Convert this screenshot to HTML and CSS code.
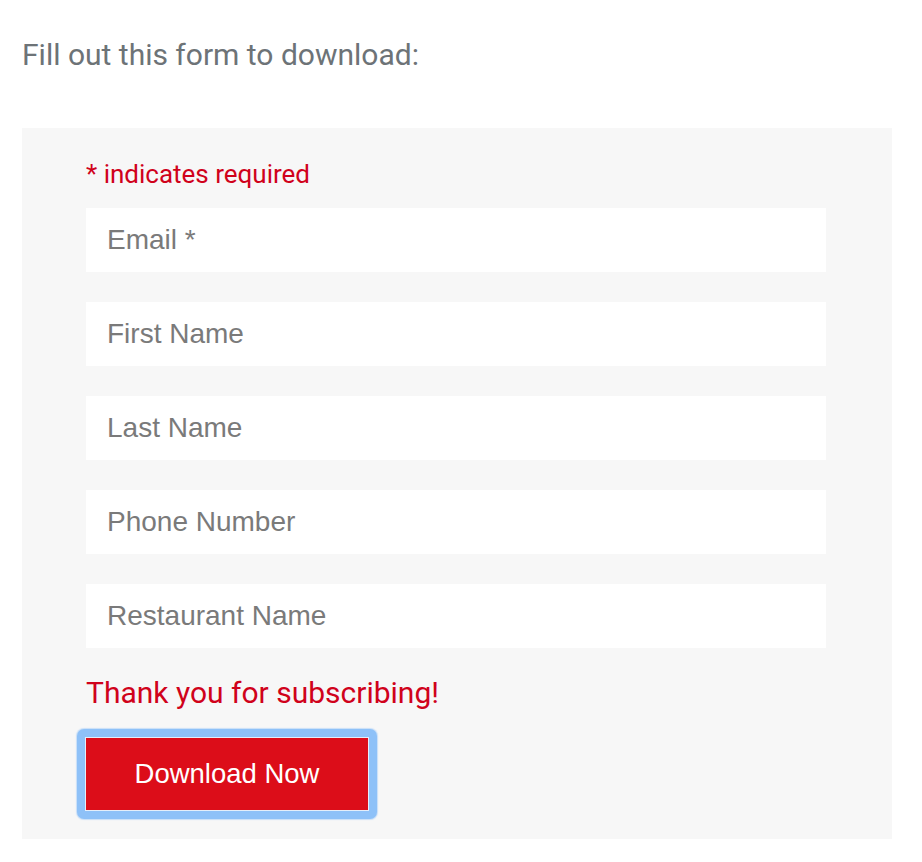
FILE: index.html
```html
<!DOCTYPE html>
<html lang="en">
<head>
<meta charset="utf-8">
<title>Download form</title>
<link rel="stylesheet" href="styles.css">
</head>
<body>
<div class="page">
  <p class="intro">Fill out this form to download:</p>
  <form class="signup">
    <div class="required-note">* indicates required</div>
    <input class="field" type="email" placeholder="Email *">
    <input class="field" type="text" placeholder="First Name">
    <input class="field" type="text" placeholder="Last Name">
    <input class="field" type="text" placeholder="Phone Number">
    <input class="field" type="text" placeholder="Restaurant Name">
    <div class="thanks">Thank you for subscribing!</div>
    <div class="focus-ring">
      <button class="submit" type="button">Download Now</button>
    </div>
  </form>
</div>
</body>
</html>
```
FILE: styles.css
```css
html, body {
  margin: 0;
  padding: 0;
  background: #ffffff;
}

.page {
  padding: 0 22px;
  font-family: Roboto, "Liberation Sans", sans-serif;
}

.intro {
  margin: 35px 0 0;
  font-size: 30px;
  line-height: 40px;
  color: #6d7377;
}

.signup {
  margin-top: 53px;
  width: 870px;
  box-sizing: border-box;
  background: #f7f7f7;
  padding: 28px 66px 20px 64px;
  display: flex;
  flex-direction: column;
}

.required-note {
  font-size: 26px;
  line-height: 36px;
  color: #d0021b;
  margin-bottom: 16px;
}

.field {
  display: block;
  width: 740px;
  height: 64px;
  box-sizing: border-box;
  margin: 0 0 30px;
  padding: 0 21px;
  border: none;
  background: #ffffff;
  font-family: "Liberation Sans", Arial, sans-serif;
  font-size: 28px;
  color: #333333;
  outline: none;
}

.field:last-of-type {
  margin-bottom: 25px;
}

.field::placeholder {
  color: #7a7a7a;
  opacity: 1;
}

.thanks {
  font-size: 30px;
  line-height: 40px;
  color: #d0021b;
  margin-bottom: 16px;
}

.focus-ring {
  display: flex;
  width: fit-content;
  margin-left: -9px;
  padding: 9px;
  background: #8ec1f8;
  border-radius: 7px;
  box-shadow: 0 0 1px 1px rgba(142, 193, 248, 0.45);
}

.submit {
  width: 282px;
  height: 72px;
  border: none;
  margin: 0;
  padding: 0;
  background: #dc0d19;
  color: #ffffff;
  font-family: "Liberation Sans", Arial, sans-serif;
  font-size: 27.5px;
  box-shadow: 0 0 0 1px #e4eefa;
  cursor: pointer;
}
```
